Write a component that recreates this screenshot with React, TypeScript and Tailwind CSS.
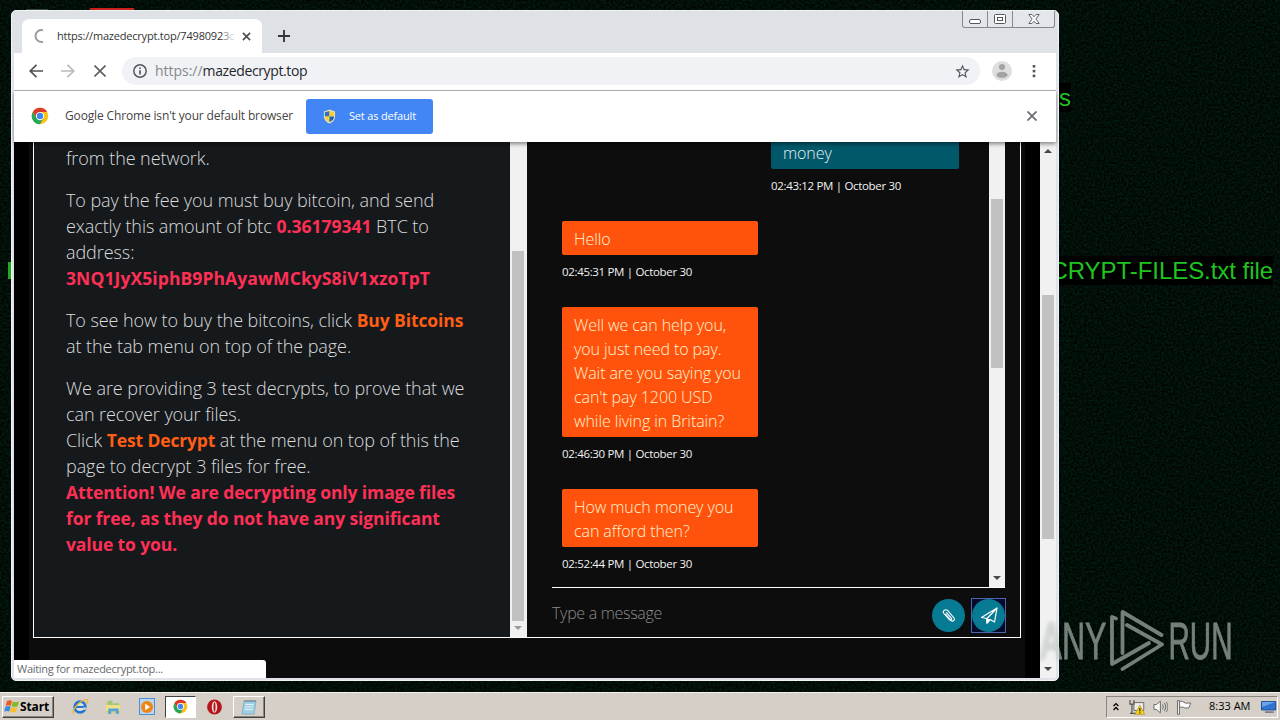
import type { ReactNode } from "react";

function ChromeLogo({ className }: { className: string }) {
  return (
    <svg viewBox="0 0 48 48" className={className}>
      <circle cx="24" cy="24" r="22" fill="#fbc116" />
      <path d="M24 24 4.9 13A22 22 0 0 1 43 13H24Z" fill="#dc3b2c" />
      <path d="M4.900 13 14.500 29.500 24 24V13Z" fill="#dc3b2c" />
      <path d="M4.900 13A22 22 0 0 0 24 46l9-16.500-18.500 0Z" fill="#26a65b" />
      <circle cx="24" cy="24" r="11" fill="#fff" />
      <circle cx="24" cy="24" r="8.500" fill="#4285f4" />
    </svg>
  );
}

function Shield() {
  return (
    <svg viewBox="0 0 14 16" className="h-[15px] w-[13px]">
      <path d="M7 .5 13 2.500V8c0 4-3 6.300-6 7.500C4 14.300 1 12 1 8V2.500Z" fill="#e8e2b8" />
      <path d="M7 2v6H2V3.500Z" fill="#2f6fc4" />
      <path d="M7 2v6h5V3.500Z" fill="#f7cf2e" />
      <path d="M7 8v6C4 12.500 2 11 2 8Z" fill="#f7cf2e" />
      <path d="M7 8v6c3-1.500 5-3 5-6Z" fill="#2460b0" />
    </svg>
  );
}

function Arrow({ up }: { up?: boolean }) {
  return (
    <svg viewBox="0 0 8 4" className="h-[4px] w-[8px]">
      <path d={up ? "M4 0 8 4H0Z" : "M0 0H8L4 4Z"} fill="#484848" />
    </svg>
  );
}

function Message({ time, mine, children }: { time: string; mine?: boolean; children: ReactNode }) {
  return (
    <div className={mine ? "mb-[26px] ml-[209px] w-[188px]" : "mb-[26px] w-[196px]"}>
      <div
        className={
          mine
            ? "rounded-[2px] bg-[#00586a] px-3 pt-[6px] pb-[4px] text-[16px] leading-[24px] font-light tracking-[-0.08px] text-[#e6f2f4]"
            : "rounded-[2px] bg-[#ff530d] px-3 pt-[6px] pb-[4px] text-[16px] leading-[24px] font-light tracking-[-0.08px] text-[#fff3d2]"
        }
      >
        {children}
      </div>
      <div className="mt-2 text-[11.5px] leading-[18px] tracking-[-0.33px] text-[#f2f2f2]">{time}</div>
    </div>
  );
}

function TabBar() {
  return (
    <div className="flex h-[42px] shrink-0 items-end bg-[#dee1e6]">
      <div className="ml-[8px] flex h-[34px] w-[240px] items-center rounded-t-[7px] bg-white">
        <svg viewBox="0 0 16 16" className="ml-[11px] h-4 w-4" fill="none" stroke="#9c9c9c" strokeWidth="2">
          <path d="M10 2.200A6 6 0 1 0 10 13.800" />
        </svg>
        <div className="ml-[8px] w-[178px] overflow-hidden text-[11px] tracking-[-0.2px] whitespace-nowrap text-[#333]">
          https://mazedecrypt.top/7498092<span className="text-[#999]">3</span>
          <span className="text-[#d4d4d4]">c</span>
        </div>
        <svg viewBox="0 0 10 10" className="ml-[7px] h-[9px] w-[9px]" stroke="#4a4d51" strokeWidth="1.800">
          <path d="M1 1 9 9M9 1 1 9" />
        </svg>
      </div>
      <svg viewBox="0 0 12 12" className="mb-[11px] ml-[16px] h-3 w-3" stroke="#32353a" strokeWidth="1.900">
        <path d="M6 0V12M0 6H12" />
      </svg>
      <div className="flex-1" />
      <div className="mr-px flex h-[17px] w-[93px] self-start rounded-b-[3px] border border-t-0 border-[#85888d] bg-[#e3e6ea]">
        <div className="flex w-[25px] items-end justify-center border-r border-[#85888d] pb-[3px]">
          <div className="h-[5px] w-[12px] rounded-[2px] border border-[#54575c] bg-white" />
        </div>
        <div className="flex w-[25px] items-center justify-center border-r border-[#85888d]">
          <svg viewBox="0 0 12 10" className="h-[10px] w-[12px]" fill="#fff" stroke="#54575c">
            <rect x=".5" y=".5" width="11" height="9" rx="1" />
            <rect x="3.500" y="3.500" width="5" height="3" />
          </svg>
        </div>
        <div className="flex flex-1 items-center justify-center">
          <svg viewBox="0 0 12 10" className="h-[10px] w-[12px]" fill="#fff" stroke="#54575c" strokeWidth=".9">
            <path d="M.8.5H4L6 2.800 8 .5h3.200L7.800 5l3.400 4.500H8L6 7.200 4 9.500H.8L4.200 5Z" />
          </svg>
        </div>
      </div>
    </div>
  );
}

function Toolbar() {
  return (
    <div className="flex h-[38px] shrink-0 items-center border-b border-[#b3b5b8] bg-white pb-px">
      <svg viewBox="0 0 14 14" className="ml-[15px] h-[14px] w-[14px]" fill="none" stroke="#4d5054" strokeWidth="1.700">
        <path d="M14 7H1M7.500.8 1.200 7l6.300 6.200" />
      </svg>
      <svg viewBox="0 0 14 14" className="ml-[18px] h-[14px] w-[14px]" fill="none" stroke="#b9bbbe" strokeWidth="1.700">
        <path d="M0 7H13M6.500.8 12.800 7l-6.300 6.200" />
      </svg>
      <svg viewBox="0 0 12 12" className="ml-[19px] h-3 w-3" stroke="#5b5e62" strokeWidth="1.600">
        <path d="M.5.5l11 11M11.500.5l-11 11" />
      </svg>
      <div className="ml-[16px] flex h-[28px] w-[858px] items-center rounded-full bg-[#f0f2f5]">
        <svg viewBox="0 0 14 14" className="ml-[11px] h-[14px] w-[14px]" fill="none" stroke="#55585c" strokeWidth="1.500">
          <circle cx="7" cy="7" r="6.200" />
          <path d="M7 6.200V10.500M7 3.500V5" strokeWidth="1.700" />
        </svg>
        <div className="ml-[8px] text-[14px] leading-[20px] tracking-[-0.38px] text-[#25272a]">
          <span className="tracking-[-0.02px] text-[#85888c]">https://</span>mazedecrypt.top
        </div>
        <div className="flex-1" />
        <svg viewBox="0 0 24 24" className="mr-[9px] h-[17px] w-[17px]" fill="#55585c">
          <path d="M22 9.240l-7.190-.62L12 2 9.190 8.630 2 9.240l5.460 4.730L5.820 21 12 17.270 18.180 21l-1.630-7.030L22 9.240zM12 15.400l-3.760 2.270 1-4.280-3.320-2.880 4.380-.38L12 6.100l1.710 4.040 4.380.38-3.320 2.880 1 4.280L12 15.400z" />
        </svg>
      </div>
      <svg viewBox="0 0 20 20" className="ml-[12px] h-5 w-5">
        <circle cx="10" cy="10" r="10" fill="#dedede" />
        <circle cx="10" cy="6" r="3" fill="#a3a3a3" />
        <ellipse cx="10" cy="13.800" rx="5.600" ry="3" fill="#a3a3a3" />
      </svg>
      <svg viewBox="0 0 4 14" className="ml-[20px] h-[14px] w-[4px]" fill="#55585c">
        <rect x=".7" y="1" width="2.600" height="2.600" />
        <rect x=".7" y="5.800" width="2.600" height="2.600" />
        <rect x=".7" y="10.600" width="2.600" height="2.600" />
      </svg>
    </div>
  );
}

function InfoBar() {
  return (
    <div className="relative z-10 flex h-[51px] shrink-0 items-center bg-white shadow-[0_2px_4px_rgba(0,0,0,0.45)]">
      <ChromeLogo className="-mt-px ml-[17px] h-[18px] w-[18px]" />
      <div className="-mt-px ml-[16px] w-[241px] text-[12px] tracking-[-0.15px] whitespace-nowrap text-[#444]">
        Google Chrome isn't your default browser
      </div>
      <div className="flex h-[35px] w-[127px] items-center rounded-[3px] bg-[#4285f4] pl-[17px]">
        <Shield />
        <span className="ml-[13px] text-[11px] tracking-[-0.17px] whitespace-nowrap text-white">Set as default</span>
      </div>
      <div className="flex-1" />
      <svg viewBox="0 0 10 10" className="-mt-px mr-[19px] h-[10px] w-[10px]" stroke="#6b6e72" strokeWidth="1.800">
        <path d="M.5.5l9 9M9.500.5l-9 9" />
      </svg>
    </div>
  );
}

function Instructions() {
  return (
    <div className="h-full w-[476px] shrink-0 bg-[#16191c] pt-[3px] pl-[32px] text-[18px] leading-[26px] font-light tracking-[-0.07px] whitespace-nowrap text-[#dcdcdc]">
      <p>from the network.</p>
      <p className="mt-4">
        To pay the fee you must buy bitcoin, and send
        <br />
        exactly this amount of btc{" "}
        <b className="text-[17.5px] font-bold tracking-[0px] text-[#ff2f55]">0.36179341</b> BTC to
        <br />
        address:
        <br />
        <b className="text-[17.5px] font-bold tracking-[0.09px] text-[#ff2f55]">3NQ1JyX5iphB9PhAyawMCkyS8iV1xzoTpT</b>
      </p>
      <p className="mt-4">
        To see how to buy the bitcoins, click{" "}
        <b className="text-[17.5px] font-bold tracking-[-0.09px] text-[#ff5e14]">Buy Bitcoins</b>
        <br />
        at the tab menu on top of the page.
      </p>
      <p className="mt-4">
        We are providing 3 test decrypts, to prove that we
        <br />
        can recover your files.
        <br />
        Click <b className="text-[17.5px] font-bold tracking-[-0.15px] text-[#ff5e14]">Test Decrypt</b> at the menu on
        top of this the
        <br />
        page to decrypt 3 files for free.
        <br />
        <b className="text-[17.5px] font-bold tracking-[-0.11px] text-[#ff2f55]">
          Attention! We are decrypting only image files
          <br />
          for free, as they do not have any significant
          <br />
          value to you.
        </b>
      </p>
    </div>
  );
}

function Chat() {
  return (
    <div className="flex h-full flex-1 flex-col bg-[#0d0d0d] pr-[15px] pl-[25px]">
      <div className="flex h-[446px] shrink-0 border-b border-white">
        <div className="h-[445px] flex-1 overflow-hidden pl-[10px]">
          <div className="-mt-[7px]">
            <Message mine time="02:43:12 PM | October 30">
              money
            </Message>
            <Message time="02:45:31 PM | October 30">Hello</Message>
            <Message time="02:46:30 PM | October 30">
              Well we can help you,
              <br />
              you just need to pay.
              <br />
              Wait are you saying you
              <br />
              can't pay 1200 USD
              <br />
              while living in Britain?
            </Message>
            <Message time="02:52:44 PM | October 30">
              How much money you
              <br />
              can afford then?
            </Message>
          </div>
        </div>
        <div className="flex w-[16px] flex-col items-center bg-[#f1f1f1] pt-[57px]">
          <div className="h-[169px] w-[12px] bg-[#c1c1c1]" />
          <div className="flex-1" />
          <div className="pb-[7px] leading-none">
            <Arrow />
          </div>
        </div>
      </div>
      <div className="flex h-[49px] items-center">
        <span className="text-[16px] font-light tracking-[-0.3px] text-[#8b8b8b]">Type a message</span>
        <div className="flex-1" />
        <div className="mt-[6px] flex h-[33px] w-[33px] items-center justify-center rounded-full bg-[#077a94]">
          <svg viewBox="0 0 16 16" className="h-4 w-4" fill="none" stroke="#fff" strokeWidth="1.100" strokeLinecap="round">
            <path d="M4.500 6.200l5.300 6.100c1.800 1.800 4.400.2 3.400-2.100L6.600 2.500C4.600.6 1.300 2.800 2.700 5.300l5.900 6.500c1.200 1 2.600-.2 1.900-1.400L5.500 4.700" />
          </svg>
        </div>
        <div className="mt-[6px] -mr-[1px] ml-[6px] flex h-[35px] w-[35px] items-center justify-center border border-[#5063a8] bg-[#060b2c]">
          <div className="flex h-[33px] w-[33px] items-center justify-center rounded-full bg-[#077a94]">
            <svg viewBox="0 0 18 18" className="h-[18px] w-[18px]" fill="none" stroke="#fff" strokeWidth="1.200" strokeLinejoin="round">
              <path d="M1.500 10.500 17 1 14.500 15 10 12.500 7 16V11.500L17 1 7 11.500Z" />
              <path d="M7 12v4l2.500-3Z" fill="#fff" />
            </svg>
          </div>
        </div>
      </div>
    </div>
  );
}

function WebPage() {
  return (
    <div className="relative flex min-h-0 flex-1 bg-black">
      <div className="ml-[15px] h-full w-[996px] bg-[#0c0c0c] pl-[4px]">
        <div className="flex h-[496px] w-[988px] border-x border-b border-white">
          <Instructions />
          <div className="flex w-[16px] shrink-0 flex-col items-center bg-[#f1f1f1] pt-[109px]">
            <div className="h-[370px] w-[12px] bg-[#c1c1c1]" />
            <div className="pt-[5px] opacity-50">
              <Arrow />
            </div>
          </div>
          <div className="w-px shrink-0 bg-[#f4f4f4]" />
          <Chat />
        </div>
      </div>
      <div className="flex-1" />
      <div className="flex w-[16px] shrink-0 flex-col items-center bg-[#f1f1f1]">
        <div className="pt-[7px]">
          <Arrow up />
        </div>
        <div className="mt-auto h-[244px] w-[12px] bg-[#c1c1c1]" />
        <div className="flex h-[139px] flex-col justify-end pb-[7px]">
          <Arrow />
        </div>
      </div>
      <div className="absolute bottom-0 left-0 flex h-[18px] w-[252px] items-center rounded-tr-[3px] bg-white pl-[3px] text-[11px] tracking-[-0.28px] text-[#66696d]">
        Waiting for mazedecrypt.top...
      </div>
    </div>
  );
}

function Watermark() {
  return (
    <svg viewBox="0 0 240 82" className="absolute top-[600px] left-[1030px] h-[82px] w-[240px] drop-shadow-[0_0_2px_rgba(0,0,0,0.35)]">
      <g
        fill="#d5ded9"
        stroke="#d5ded9"
        strokeWidth=".8"
        opacity=".55"
        fontFamily="'Liberation Sans', sans-serif"
        fontSize="51"
      >
        <text transform="translate(10.500 59) scale(.63 1)">ANY</text>
        <text transform="translate(138.500 59) scale(.58 1)">RUN</text>
      </g>
      <g fill="none" stroke="#d5ded9" opacity=".55" strokeWidth="3.800" strokeLinejoin="round" strokeLinecap="round">
        <path d="M86 18.500 L82 17 V64 L119 43" />
        <path d="M92.500 53 V12 L131.500 35" />
        <path d="M92.500 69 L132 44.500 L97 25" />
      </g>
    </svg>
  );
}

function Taskbar() {
  return (
    <div className="flex h-[28px] shrink-0 items-center border-t border-[#f4f1ec] bg-[#d6cfc7] pl-[2px]">
      <div className="flex h-[22px] w-[52px] items-center border border-t-white border-r-[#404040] border-b-[#404040] border-l-white pl-px shadow-[inset_-1px_-1px_0_#8a857e]">
        <svg viewBox="0 0 16 14" className="h-[15px] w-[16px]">
          <path d="M3 1.500C5 .5 6.500.8 8 1.600L6.800 6.300C5.300 5.500 3.500 5.500 1.700 6.300Z" fill="#ee5a24" />
          <path d="M8.800 2c2 1 4 1 6.200 0L13.600 6.700c-2 .9-4 .8-6 0Z" fill="#7fba28" />
          <path d="M1.500 7.200c2-.9 3.700-.8 5.100 0L5.300 12C3.800 11.200 2 11.200.2 12Z" fill="#3a8be0" />
          <path d="M7.400 7.600c2 1 4 .9 6 0L12 12.300c-2 .9-4 .8-6 0Z" fill="#fbc02d" />
        </svg>
        <span className="text-[12px] leading-[18px] font-bold tracking-[-0.1px] text-black">Start</span>
      </div>
      <svg viewBox="0 0 18 18" className="ml-[18px] h-[17px] w-[17px]">
        <circle cx="8.500" cy="9.500" r="5.700" fill="#fff" fillOpacity=".4" stroke="#2278cf" strokeWidth="3" />
        <path d="M4 9.500H14" stroke="#2278cf" strokeWidth="2.200" />
        <path d="M11.500 12.500h4v-2.500h-4Z" fill="#d6cfc7" />
        <path d="M2 16.500C-1 13 9 1.500 16 1.500c1.500 1 .5 3-.6 4.500" fill="none" stroke="#efb52d" strokeWidth="1.300" />
      </svg>
      <svg viewBox="0 0 18 18" className="ml-[16px] h-[18px] w-[17px]">
        <path d="M1 4h6l1 2h8v9H1Z" fill="#e3c568" />
        <path d="M3 2h5v5H3ZM9 5h6v3H9Z" fill="#9cc87c" />
        <path d="M1 7h15v6H1Z" fill="#f4df8a" />
        <path d="M3.500 16.500v-6h11v6h-3v-3h-5v3Z" fill="#4fa7dc" />
      </svg>
      <div className="ml-[17px] flex h-[17px] w-[16px] items-center justify-center border border-[#4c8fd6] bg-[#b8d6ef]">
        <svg viewBox="0 0 12 12" className="h-3 w-3">
          <circle cx="6" cy="6" r="6" fill="#f08513" />
          <path d="M4.200 2.700 9 6 4.200 9.300Z" fill="#fff" />
        </svg>
      </div>
      <div className="ml-[10px] flex h-[22px] w-[31px] items-center justify-center border border-t-[#404040] border-r-white border-b-white border-l-[#404040] bg-white">
        <ChromeLogo className="h-[15px] w-[15px]" />
      </div>
      <svg viewBox="0 0 16 16" className="ml-[11px] h-[16px] w-[15px]">
        <ellipse cx="8" cy="8" rx="7.900" ry="8" fill="#b5161b" />
        <ellipse cx="8" cy="8" rx="2.900" ry="6.200" fill="#f5e4e2" />
        <ellipse cx="8" cy="8" rx="1.100" ry="5" fill="#b5161b" />
      </svg>
      <div className="ml-[11px] flex h-[22px] w-[32px] items-center justify-center border border-t-white border-r-[#404040] border-b-[#404040] border-l-white shadow-[inset_-1px_-1px_0_#8a857e]">
        <svg viewBox="0 0 16 16" className="h-4 w-4">
          <path d="M3 2h12l-2 13H1Z" fill="#9fd0e4" stroke="#6fa5bd" strokeWidth=".7" />
          <path d="M4.500 5.500h8M4 8h8M3.500 10.500h8" stroke="#dff2f8" />
          <path d="M3.500 2h11" stroke="#6d7c83" strokeWidth="1.800" strokeDasharray="1 1" />
        </svg>
      </div>
      <div className="flex-1" />
      <div className="mr-[2px] flex h-[22px] w-[172px] items-center border border-t-[#8a857e] border-r-white border-b-white border-l-[#8a857e]">
        <svg viewBox="0 0 6 9" className="ml-[6px] h-[9px] w-[6px]" fill="none" stroke="#000" strokeWidth="1.300">
          <path d="M.5 4 3 1.500 5.500 4M.5 8 3 5.500 5.500 8" />
        </svg>
        <svg viewBox="0 0 16 16" className="ml-[10px] h-4 w-4">
          <path d="M5 3.500h10v8H5Z" fill="#ededed" stroke="#6c6c6c" />
          <path d="M1 1v4h4V1M3 5v10M1 14.500h6" fill="none" stroke="#555" strokeWidth="1.200" />
          <path d="M11 6l5 9.500H6Z" fill="#f7d417" stroke="#a48a0b" strokeWidth=".6" />
          <path d="M11 9v3.500M11 13.300v1.200" stroke="#222" strokeWidth="1.200" />
        </svg>
        <svg viewBox="0 0 16 16" className="ml-[8px] h-4 w-4" fill="none" stroke="#6a6a6a">
          <path d="M1 5.500h2.500L7.500 2v12L3.500 10.500H1Z" fill="#fafafa" />
          <path d="M9.500 5.500c1.200 1.500 1.200 3.500 0 5M11.500 4c2 2.500 2 5.500 0 8M13.500 3c2.300 3 2.300 7 0 10" />
        </svg>
        <svg viewBox="0 0 16 16" className="ml-[8px] h-4 w-4" fill="#fafafa" stroke="#6a6a6a">
          <path d="M1.500 1.500h2V15.500h-2Z" />
          <path d="M3.500 2.500c2.500-1 4 .2 6 1.500h5.500l-2 5h-4c-2-1.200-3.500-1-5.500-.5Z" />
        </svg>
        <span className="ml-[17px] w-[43px] text-[11px] whitespace-nowrap text-black">8:33 AM</span>
        <svg viewBox="0 0 16 14" className="ml-[10px] h-[14px] w-4">
          <path d="M.5 1.500h14.500v8.500H.5Z" fill="#2f74d0" stroke="#1c4a93" />
          <path d="M1 2h13.500L1 7Z" fill="#6ba4ea" />
          <path d="M4 12.200h9" stroke="#6c7786" strokeWidth="1.600" />
        </svg>
      </div>
    </div>
  );
}

export default function App() {
  return (
    <div className="relative flex h-[720px] w-[1280px] flex-col overflow-hidden bg-[#02100a] font-['Open_Sans','Noto_Sans',sans-serif]">
      <div className="relative h-[692px] shrink-0 overflow-hidden">
        <svg className="absolute inset-0 h-full w-full">
          <filter id="grain" colorInterpolationFilters="sRGB">
            <feTurbulence type="fractalNoise" baseFrequency="0.45" numOctaves="2" seed="4" />
            <feColorMatrix values="0 0 0 0 0.006  0 .2 0 0 -0.040  0 .12 0 0 -0.028  0 0 0 0 1" />
          </filter>
          <rect width="100%" height="100%" filter="url(#grain)" />
        </svg>
        <div className="absolute top-[8px] left-[90px] h-[4px] w-[44px] bg-[#c9201a]" />
        <div className="absolute top-[9px] left-[26px] h-[3px] w-[22px] bg-[#3c4641]" />
        <div className="absolute top-[262px] left-[8px] h-[17px] w-[3px] bg-[#1eac1e]" />
        <div className="absolute top-[83px] right-[209px] bg-black font-['Liberation_Sans',sans-serif] text-[24px] leading-[29px] text-[#1fc41f]">
          s
        </div>
        <div className="absolute top-[256px] right-[7px] bg-black font-['Liberation_Sans',sans-serif] text-[24px] leading-[29px] tracking-[-0.05px] whitespace-nowrap text-[#1fc41f]">
          CRYPT-FILES.txt file
        </div>
        <div className="absolute top-[10px] left-[11px] flex h-[671px] w-[1048px] flex-col overflow-hidden rounded-[5px] border border-[#f1f3f5] bg-[#dfe3e7] px-[2px] pb-[2px]">
          <TabBar />
          <Toolbar />
          <InfoBar />
          <WebPage />
        </div>
        <Watermark />
      </div>
      <Taskbar />
    </div>
  );
}
